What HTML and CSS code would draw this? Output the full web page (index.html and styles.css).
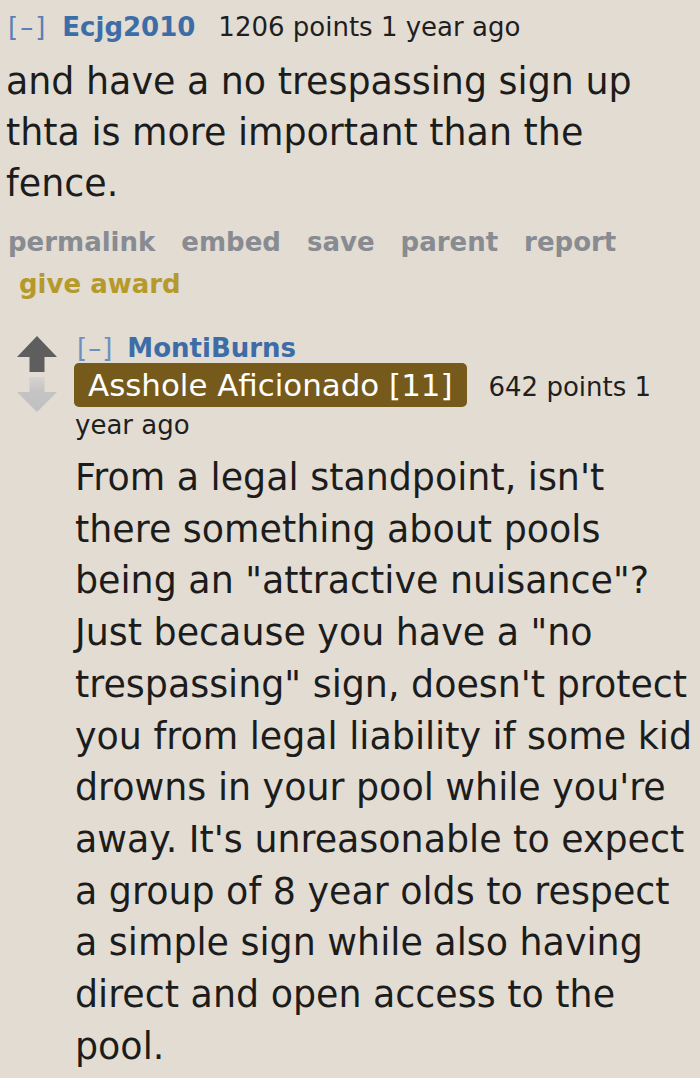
FILE: index.html
```html
<!DOCTYPE html>
<html>
<head>
<meta charset="utf-8">
<link rel="stylesheet" href="styles.css">
</head>
<body>
<div class="page">
  <div class="comment top">
    <p class="tagline"><span class="expand">[–]</span><a class="author">Ecjg2010</a><span class="score">1206 points 1 year ago</span></p>
    <div class="md">
      <p>and have a no trespassing sign up thta is more important than the fence.</p>
    </div>
    <ul class="buttons">
      <li>permalink</li>
      <li>embed</li>
      <li>save</li>
      <li>parent</li>
      <li>report</li>
      <li class="award">give award</li>
    </ul>
  </div>

  <div class="comment child">
    <div class="midcol">
      <svg class="arrow up" viewBox="0 0 40 36" width="40" height="36"><path d="M20 0 L40 21 L27.5 21 L27.5 36 L12.5 36 L12.5 21 L0 21 Z" fill="#5e5e5e"/></svg>
      <svg class="arrow down" viewBox="0 0 40 35" width="40" height="35"><defs><linearGradient id="dg" x1="0" y1="0" x2="0" y2="1"><stop offset="0" stop-color="#d6d4d0"/><stop offset="0.4" stop-color="#c4c4c4"/><stop offset="1" stop-color="#c0c0c0"/></linearGradient></defs><path d="M12.5 0 L27.5 0 L27.5 15 L40 15 L20 35 L0 15 L12.5 15 Z" fill="url(#dg)"/></svg>
    </div>
    <div class="entry">
      <p class="tagline-head"><span class="expand">[–]</span><a class="author">MontiBurns</a></p>
      <p class="tagline"><span class="flair">Asshole Aficionado [11]</span><span class="score">642 points 1 year ago</span></p>
      <div class="md">
        <p>From a legal standpoint, isn't there something about pools being an "attractive nuisance"? Just because you have a "no trespassing" sign, doesn't protect you from legal liability if some kid drowns in your pool while you're away. It's unreasonable to expect a group of 8 year olds to respect a simple sign while also having direct and open access to the pool.</p>
      </div>
    </div>
  </div>
</div>
</body>
</html>
```

FILE: styles.css
```css
html, body {
  margin: 0;
  padding: 0;
  background: #e2dcd3;
}
body {
  width: 700px;
  height: 1078px;
  overflow: hidden;
  font-family: "DejaVu Sans", Verdana, sans-serif;
  color: #1c1c1c;
}
p { margin: 0; }
a { text-decoration: none; }

.top {
  padding: 10px 0 0 6px;
}
.top .tagline {
  font-size: 26px;
  line-height: 34px;
  padding-left: 2px;
  white-space: nowrap;
}
.top .expand {
  color: #5a80b5;
  letter-spacing: 2px;
  margin-right: 15px;
}
.top .author {
  color: #3d6da6;
  font-weight: bold;
  margin-right: 23px;
}
.top .score {
  color: #1f1f1f;
}
.top .md {
  margin-top: 12px;
  font-size: 36.4px;
  line-height: 51px;
  width: 680px;
}
.buttons {
  list-style: none;
  margin: 12px 0 0 0;
  padding: 0 0 0 2px;
  display: flex;
  flex-wrap: wrap;
  column-gap: 26px;
  font-size: 26px;
  line-height: 42px;
  font-weight: bold;
  color: #888b91;
  width: 640px;
}
.buttons .award {
  color: #b59a2b;
  margin-left: 11px;
}

.child {
  display: flex;
  margin-top: 28px;
}
.midcol {
  width: 75px;
  flex: none;
  display: flex;
  flex-direction: column;
  padding: 3px 0 0 17px;
  box-sizing: border-box;
  gap: 5px;
}
.arrow { display: block; }
.entry {
  width: 622px;
}
.tagline-head {
  font-size: 26px;
  line-height: 30px;
}
.child .tagline {
  font-size: 26px;
  line-height: 36px;
}
.child .expand {
  color: #6f8fbf;
  letter-spacing: 1px;
  margin-left: 2px;
  margin-right: 14px;
}
.child .author {
  color: #3d6da6;
  font-weight: bold;
}
.flair {
  display: inline-block;
  background: #765a1b;
  color: #fff;
  border-radius: 5px;
  padding: 4px 14px 4px 14px;
  line-height: 36px;
  font-size: 30.9px;
  margin: 0 22px 0 -1px;
}
.child .score {
  color: #1f1f1f;
}
.child .md {
  margin-top: 9px;
  font-size: 36.4px;
  line-height: 51.7px;
}
```
